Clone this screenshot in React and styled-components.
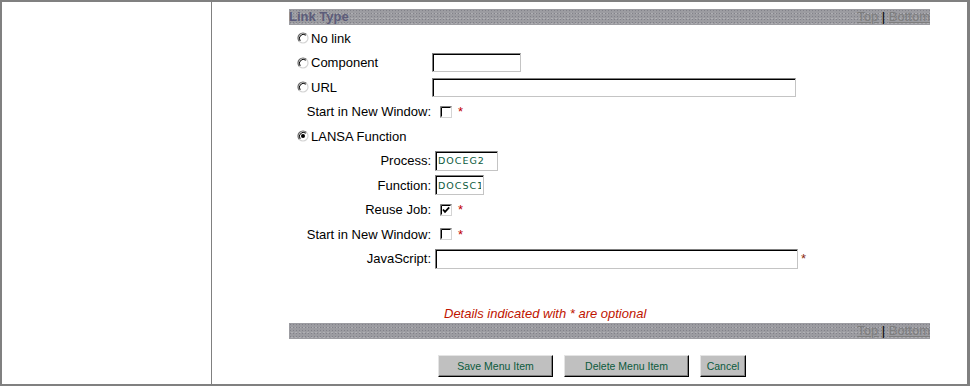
import React from "react";
import styled, { createGlobalStyle } from "styled-components";

const GlobalStyle = createGlobalStyle`
  html, body {
    margin: 0;
    padding: 0;
    background: #ffffff;
  }
  body {
    font-family: "Liberation Sans", Arial, sans-serif;
    font-size: 13px;
    color: #000;
  }
`;

function Radio({ checked }) {
  return (
    <RadioIcon width="12" height="12" viewBox="0 0 12 12">
      <circle cx="6" cy="6" r="5" fill="#fff" />
      <path d="M9.54 2.46 A5 5 0 0 0 2.46 9.54" stroke="#6a6a6a" strokeWidth="1.2" fill="none" />
      <path d="M2.46 9.54 A5 5 0 0 0 9.54 2.46" stroke="#d4d4d4" strokeWidth="1.2" fill="none" />
      <path d="M8.8 3.2 A4 4 0 0 0 3.2 8.8" stroke="#000" strokeWidth="1" fill="none" />
      {checked && <circle cx="6" cy="6" r="2" fill="#000" />}
    </RadioIcon>
  );
}

function Checkbox({ checked }) {
  return (
    <CheckIcon width="12" height="12" viewBox="0 0 12 12">
      <rect x="0.5" y="0.5" width="11" height="11" fill="#fff" stroke="#d4d4d4" />
      <path d="M0.5 11.5 V0.5 H11.5" stroke="#808080" fill="none" />
      <path d="M1.5 10.5 V1.5 H10.5" stroke="#000" fill="none" />
      {checked && (
        <path d="M3 5.5 L5 7.8 L9.2 3.4" stroke="#000" strokeWidth="1.8" fill="none" />
      )}
    </CheckIcon>
  );
}

function SectionBar({ title }) {
  return (
    <Bar>
      <BarTitle>{title}</BarTitle>
      <BarLinks>
        <BarLink>Top</BarLink> | <BarLink>Bottom</BarLink>
      </BarLinks>
    </Bar>
  );
}

function App() {
  return (
    <>
      <GlobalStyle />
      <Frame>
        <SideColumn />
        <MainColumn>
          <Content>
            <SectionBar title="Link Type" />
            <FormGrid>
              <RadioLabel $span>
                <Radio /> No link
              </RadioLabel>

              <RadioLabel>
                <Radio /> Component
              </RadioLabel>
              <Field $shift={-3}>
                <TextBox $w={89} $h={19} />
              </Field>

              <RadioLabel>
                <Radio /> URL
              </RadioLabel>
              <Field $shift={-3}>
                <TextBox $w={364} $h={19} />
              </Field>

              <FieldLabel>Start in New Window:</FieldLabel>
              <Field $shift={5}>
                <Checkbox />
                <Optional>*</Optional>
              </Field>

              <RadioLabel $span>
                <Radio checked /> LANSA Function
              </RadioLabel>

              <FieldLabel>Process:</FieldLabel>
              <Field>
                <TextBox $w={63} $h={20} defaultValue="DOCEG2" />
              </Field>

              <FieldLabel>Function:</FieldLabel>
              <Field>
                <TextBox $w={49} $h={20} defaultValue="DOCSC1" />
              </Field>

              <FieldLabel>Reuse Job:</FieldLabel>
              <Field $shift={5}>
                <Checkbox checked />
                <Optional>*</Optional>
              </Field>

              <FieldLabel>Start in New Window:</FieldLabel>
              <Field $shift={5}>
                <Checkbox />
                <Optional>*</Optional>
              </Field>

              <FieldLabel>JavaScript:</FieldLabel>
              <Field $gap={3}>
                <TextBox $w={363} $h={20} />
                <Optional $dark>*</Optional>
              </Field>
            </FormGrid>

            <Note>Details indicated with * are optional</Note>
            <SectionBar title="" />

            <ButtonRow>
              <Button $w={115}>Save Menu Item</Button>
              <Button $w={125}>Delete Menu Item</Button>
              <Button $w={46}>Cancel</Button>
            </ButtonRow>
          </Content>
        </MainColumn>
      </Frame>
    </>
  );
}

const Frame = styled.div`
  box-sizing: border-box;
  width: 970px;
  height: 386px;
  border: 2px solid #808080;
  border-right-width: 3px;
  display: flex;
`;

const SideColumn = styled.div`
  width: 209px;
  flex-shrink: 0;
  border-right: 1px solid #808080;
`;

const MainColumn = styled.div`
  flex: 1;
  padding: 7px 0 0 77px;
`;

const Content = styled.div`
  width: 641px;
  display: flex;
  flex-direction: column;
`;

const Bar = styled.div`
  height: 16px;
  display: flex;
  align-items: center;
  justify-content: space-between;
  overflow: hidden;
  white-space: nowrap;
  background-color: #9c9ca1;
  background-image: radial-gradient(#818189 0.7px, transparent 0.9px),
    radial-gradient(#b0b0b4 0.6px, transparent 0.8px);
  background-size: 3px 3px, 4px 5px;
  background-position: 0 0, 1px 2px;
  font-size: 13px;
  line-height: 16px;
`;

const BarTitle = styled.span`
  font-weight: bold;
  color: #5c5c7a;
`;

const BarLinks = styled.span`
  flex-shrink: 0;
  color: #000;
`;

const BarLink = styled.a`
  color: #7e7e7e;
  text-decoration: underline;
`;

const FormGrid = styled.div`
  display: grid;
  grid-template-columns: 146px 1fr;
  grid-auto-rows: 24.5px;
  align-items: center;
  margin-top: 1px;
`;

const RadioLabel = styled.label`
  display: flex;
  align-items: center;
  gap: 2px;
  padding-left: 8px;
  white-space: nowrap;
  grid-column: ${(p) => (p.$span ? "1 / -1" : "auto")};
`;

const RadioIcon = styled.svg`
  display: block;
  flex-shrink: 0;
`;

const CheckIcon = styled.svg`
  display: block;
  flex-shrink: 0;
`;

const FieldLabel = styled.span`
  text-align: right;
  padding-right: 4px;
  white-space: nowrap;
`;

const Field = styled.div`
  display: flex;
  align-items: center;
  gap: ${(p) => p.$gap ?? 6}px;
  margin-left: ${(p) => p.$shift ?? 0}px;
`;

const TextBox = styled.input.attrs({ type: "text" })`
  box-sizing: border-box;
  width: ${(p) => p.$w}px;
  height: ${(p) => p.$h}px;
  margin: 0;
  padding: 0 2px;
  border: 1px solid;
  border-color: #808080 #c4c4c4 #c4c4c4 #808080;
  box-shadow: inset 1px 1px 0 #000;
  background: #fff;
  font-family: "DejaVu Sans", Verdana, sans-serif;
  font-size: 9.5px;
  letter-spacing: 1px;
  color: #0b5a3c;
  outline: none;
`;

const Optional = styled.span`
  color: ${(p) => (p.$dark ? "#8a2a10" : "#c00000")};
  font-size: 13px;
  line-height: 1;
`;

const Note = styled.div`
  margin-top: 35px;
  padding-left: 155px;
  height: 16px;
  line-height: 16px;
  font-size: 13px;
  font-style: italic;
  color: #c01400;
  margin-bottom: 1px;
`;

const ButtonRow = styled.div`
  display: flex;
  gap: 11px;
  margin-top: 16px;
  padding-left: 149px;
`;

const Button = styled.button`
  box-sizing: border-box;
  width: ${(p) => p.$w}px;
  height: 22px;
  padding: 0;
  background: #c0c0c0;
  border: 1px solid;
  border-color: #e4e4e4 #000 #000 #e4e4e4;
  box-shadow: inset -1px -1px 0 #808080;
  font-family: "Liberation Sans", Arial, sans-serif;
  font-size: 10.5px;
  color: #0b5a3c;
  cursor: pointer;
`;

export default App;
